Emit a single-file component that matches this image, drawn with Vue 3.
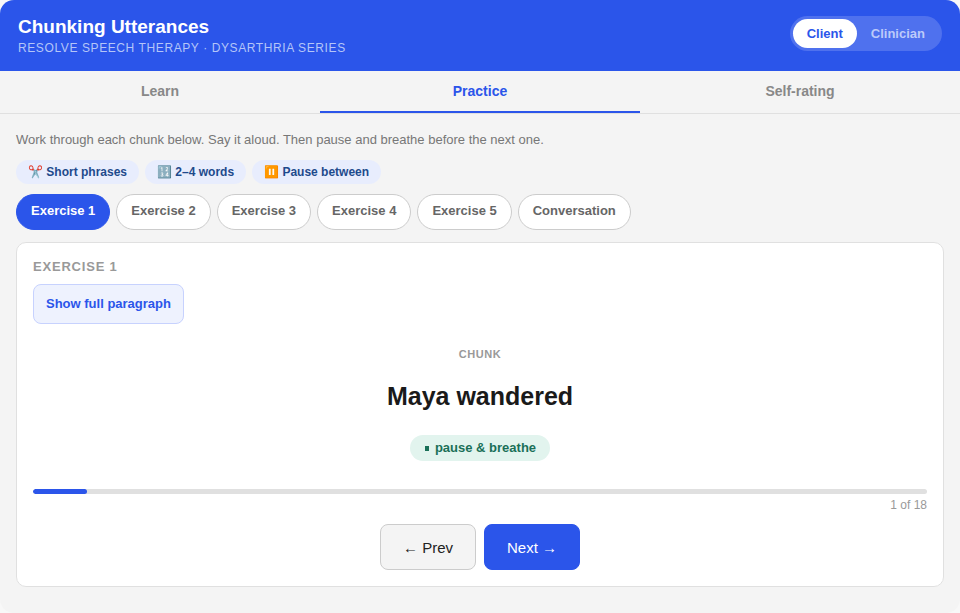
<script setup>
import { ref } from 'vue'

const role = ref('Client')
const tab = ref('Practice')
const current = ref(0)
const tabs = ['Learn', 'Practice', 'Self-rating']
const chips = ['✂️ Short phrases', '🔢 2–4 words', '⏸️ Pause between']
const exercises = ['Exercise 1', 'Exercise 2', 'Exercise 3', 'Exercise 4', 'Exercise 5', 'Conversation']
const total = 18
</script>

<template>
  <main class="app">
    <header class="top">
      <div>
        <h1>Chunking Utterances</h1>
        <p class="series">RESOLVE SPEECH THERAPY · DYSARTHRIA SERIES</p>
      </div>
      <div class="roles">
        <button v-for="r in ['Client', 'Clinician']" :key="r" :class="{ on: role === r }" @click="role = r">{{ r }}</button>
      </div>
    </header>

    <nav class="tabs">
      <button v-for="t in tabs" :key="t" :class="{ on: tab === t }" @click="tab = t">{{ t }}</button>
    </nav>

    <section class="content">
      <p class="hint">Work through each chunk below. Say it aloud. Then pause and breathe before the next one.</p>
      <div class="chips">
        <span v-for="c in chips" :key="c" class="chip">{{ c }}</span>
      </div>
      <div class="exercises">
        <button v-for="(e, i) in exercises" :key="e" :class="{ on: i === 0 }">{{ e }}</button>
      </div>

      <div class="card">
        <div class="label">EXERCISE 1</div>
        <button class="para">Show full paragraph</button>
        <div class="chunk-label">CHUNK</div>
        <div class="chunk">Maya wandered</div>
        <div class="pause-row"><span class="pause"><i class="dot"></i>pause &amp; breathe</span></div>
        <div class="track"><div class="fill" :style="{ width: Math.round((current + 1) / total * 100) + '%' }"></div></div>
        <div class="count">{{ current + 1 }} of {{ total }}</div>
        <div class="nav">
          <button class="prev">← Prev</button>
          <button class="next">Next →</button>
        </div>
      </div>
    </section>
  </main>
</template>

<style>
html, body { background: #f8f8f8; }
</style>

<style scoped>
.app {
  width: 960px;
  height: 613px;
  background: #f4f4f4;
  border-radius: 14px;
  overflow: hidden;
  font-family: "Liberation Sans", Arial, sans-serif;
}
button { font-family: inherit; cursor: pointer; }

.top {
  height: 71px;
  box-sizing: border-box;
  background: #2b55ea;
  display: flex;
  align-items: flex-start;
  justify-content: space-between;
  padding: 16px 18px 0;
}
h1 {
  margin: 0 0 3px;
  font-size: 19px;
  line-height: 22px;
  font-weight: 700;
  color: #fff;
}
.series {
  margin: 0;
  font-size: 12px;
  line-height: 14px;
  letter-spacing: 0.6px;
  color: #b4c5f8;
}
.roles {
  display: flex;
  padding: 3px;
  border-radius: 18px;
  background: #4f71ee;
}
.roles button {
  border: none;
  background: none;
  height: 29px;
  padding: 0 14px;
  border-radius: 15px;
  font-size: 13px;
  font-weight: 700;
  color: #bccafa;
}
.roles button.on { background: #fff; color: #2b55ea; }

.tabs {
  display: flex;
  height: 43px;
  box-sizing: border-box;
  border-bottom: 1px solid #e0e0e0;
}
.tabs button {
  flex: 1;
  border: none;
  border-bottom: 2px solid transparent;
  background: none;
  font-size: 14px;
  font-weight: 700;
  color: #888;
  padding: 0;
}
.tabs button.on { color: #2b55ea; border-bottom-color: #2b55ea; }

.content { padding: 17px 16px 0; }
.hint {
  margin: 0 0 12px;
  font-size: 13px;
  line-height: 17px;
  color: #777;
}
.chips { display: flex; gap: 6px; margin-bottom: 10px; }
.chip {
  height: 24px;
  line-height: 24px;
  padding: 0 12px;
  border-radius: 12px;
  background: #e8edfd;
  color: #1e4a8c;
  font-size: 12px;
  font-weight: 700;
}
.exercises { display: flex; gap: 6px; margin-bottom: 12px; }
.exercises button {
  height: 36px;
  padding: 0 14px 3px;
  border: 1px solid #ccc;
  border-radius: 18px;
  background: #fff;
  color: #666;
  font-size: 13px;
  font-weight: 700;
}
.exercises button.on { background: #2b55ea; border-color: #2b55ea; color: #fff; }

.card {
  height: 345px;
  box-sizing: border-box;
  background: #fff;
  border: 1px solid #e0e0e0;
  border-radius: 10px;
  padding: 16px;
}
.label {
  font-size: 13px;
  line-height: 15px;
  font-weight: 700;
  letter-spacing: 0.8px;
  color: #999;
  margin-bottom: 10px;
}
.para {
  display: block;
  height: 40px;
  padding: 0 12px 1px;
  border: 1px solid #c7d2fe;
  border-radius: 8px;
  background: #eef2fe;
  color: #2b55ea;
  font-size: 13px;
  font-weight: 700;
}
.chunk-label {
  margin-top: 24px;
  text-align: center;
  font-size: 11px;
  line-height: 13px;
  font-weight: 700;
  letter-spacing: 0.6px;
  color: #999;
}
.chunk {
  margin-top: 19px;
  text-align: center;
  font-size: 25px;
  line-height: 32px;
  font-weight: 700;
  color: #1a1a1a;
}
.pause-row { margin-top: 23px; text-align: center; height: 26px; }
.pause {
  display: inline-block;
  height: 26px;
  line-height: 26px;
  padding: 0 14px;
  border-radius: 13px;
  background: #e2f4ee;
  color: #1a7058;
  font-size: 13px;
  font-weight: 700;
}
.dot {
  display: inline-block;
  width: 4px;
  height: 5px;
  margin: 0 6px 0 1px;
  vertical-align: 1px;
  background: #1a7058;
}
.track {
  margin-top: 28px;
  height: 5px;
  border-radius: 3px;
  background: #e0e0e0;
  overflow: hidden;
}
.fill { height: 100%; background: #2b55ea; border-radius: 3px; }
.count {
  margin-top: 4px;
  text-align: right;
  font-size: 12px;
  line-height: 14px;
  color: #999;
}
.nav { display: flex; justify-content: center; gap: 8px; margin-top: 12px; }
.nav button {
  height: 46px;
  padding: 0 22px;
  border-radius: 8px;
  font-size: 15px;
}
.prev { background: #f4f4f4; border: 1px solid #ccc; color: #222; }
.next { background: #2b55ea; border: 1px solid #2b55ea; color: #fff; }
</style>
